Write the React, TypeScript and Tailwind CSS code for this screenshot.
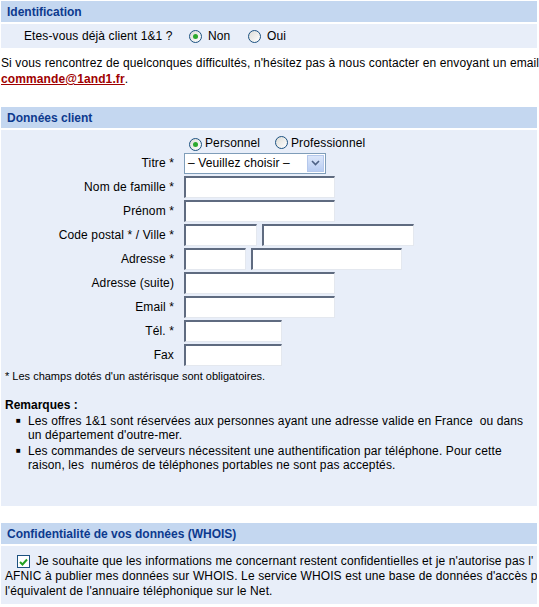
import React from "react";

function Radio({ checked }: { checked?: boolean }) {
  return (
    <span className="inline-flex w-[13px] h-[13px] rounded-full border border-[#1c5180] bg-[linear-gradient(135deg,#dcdcd7,#ffffff)] items-center justify-center shrink-0">
      {checked && <span className="w-[5px] h-[5px] rounded-full bg-[#2ca82c]" />}
    </span>
  );
}

function Field({ w }: { w: number }) {
  return (
    <span
      className="inline-block h-[22px] bg-white border-t-2 border-l-2 border-b border-r border-t-[#5f6b80] border-l-[#5f6b80] border-b-[#e4e8ef] border-r-[#e4e8ef]"
      style={{ width: w }}
    />
  );
}

function Row({ label, children }: { label: string; children: React.ReactNode }) {
  return (
    <div className="flex items-center h-[22px] mb-[2px]">
      <div className="w-[173px] text-right whitespace-nowrap">{label}</div>
      <div className="ml-[10px] flex items-center">{children}</div>
    </div>
  );
}

function Header({ children }: { children: React.ReactNode }) {
  return (
    <div className="h-[21px] bg-[#c4d7f0] px-[6px] font-bold text-[#0d3a8e] leading-[22px] tracking-normal">
      {children}
    </div>
  );
}

export default function App() {
  return (
    <div className="w-[539px] h-[607px] overflow-hidden bg-white text-[12px] text-black tracking-[0.12px] font-['Liberation_Sans',Arial,sans-serif] pt-px">
      <div className="ml-px w-[536px]">
        <Header>Identification</Header>
        <div className="mt-[2px] h-[24px] bg-[#e8eef9] flex items-center">
          <span className="ml-[23px] w-[165px]">Etes-vous déjà client 1&amp;1 ?</span>
          <Radio checked />
          <span className="ml-[6px] w-[40px]">Non</span>
          <Radio />
          <span className="ml-[6px]">Oui</span>
        </div>
        <div className="mt-[7px] leading-[16px] w-[540px]">
          <div className="whitespace-nowrap">
            Si vous rencontrez de quelconques difficultés, n'hésitez pas à nous contacter en envoyant un email
          </div>
          <a href="#" className="font-bold text-[#a00000] underline">commande@1and1.fr</a>.
        </div>

        <div className="mt-[20px]">
          <Header>Données client</Header>
        </div>
        <div className="mt-[2px] h-[376px] bg-[#e8eef9]">
          <div className="h-[22px] pt-[3px] flex items-center">
            <span className="ml-[188px]"><Radio checked /></span>
            <span className="ml-[3px] w-[70px]">Personnel</span>
            <Radio />
            <span className="ml-[3px]">Professionnel</span>
          </div>
          <Row label="Titre *">
            <span className="inline-flex items-center h-[21px] w-[142px] bg-white border border-[#7f9db9] pl-[3px] pr-px">
              <span className="flex-1 whitespace-nowrap">– Veuillez choisir –</span>
              <span className="w-[17px] h-[17px] bg-[linear-gradient(#dbe6fa,#b9cdf2)] border border-[#b5c8ec] flex items-center justify-center">
                <svg width="9" height="6" viewBox="0 0 9 6">
                  <path d="M1 1 L4.5 4.5 L8 1" stroke="#4d6185" strokeWidth="1.6" fill="none" />
                </svg>
              </span>
            </span>
          </Row>
          <Row label="Nom de famille *"><Field w={151} /></Row>
          <Row label="Prénom *"><Field w={151} /></Row>
          <Row label="Code postal * / Ville *">
            <Field w={73} />
            <span className="w-[5px]" />
            <Field w={152} />
          </Row>
          <Row label="Adresse *">
            <Field w={62} />
            <span className="w-[5px]" />
            <Field w={151} />
          </Row>
          <Row label="Adresse (suite)"><Field w={151} /></Row>
          <Row label="Email *"><Field w={151} /></Row>
          <Row label="Tél. *"><Field w={98} /></Row>
          <Row label="Fax"><Field w={98} /></Row>
          <div className="pl-[4px] text-[11px] leading-[16px] tracking-normal">
            * Les champs dotés d'un astérisque sont obligatoires.
          </div>
          <div className="pl-[4px] mt-[13px] font-bold leading-[16px] tracking-normal">Remarques :</div>
          <ul className="mt-px pl-[15px] pr-[8px] leading-[14px]">
            <li className="flex mb-[2px]">
              <span className="w-[12px] shrink-0 text-[8px] leading-[14px]">■</span>
              <span>Les offres 1&amp;1 sont réservées aux personnes ayant une adresse valide en France &nbsp;ou dans un département d'outre-mer.</span>
            </li>
            <li className="flex">
              <span className="w-[12px] shrink-0 text-[8px] leading-[14px]">■</span>
              <span>Les commandes de serveurs nécessitent une authentification par téléphone. Pour cette raison, les &nbsp;numéros de téléphones portables ne sont pas acceptés.</span>
            </li>
          </ul>
        </div>

        <div className="mt-[17px]">
          <Header>Confidentialité de vos données (WHOIS)</Header>
        </div>
        <div className="mt-[2px] h-[58px] bg-[#e8eef9] overflow-hidden pl-[4px] pt-[8px] leading-[15px] whitespace-nowrap">
          <div className="flex items-center">
            <span className="ml-[12px] w-[13px] h-[13px] border border-[#1c5180] bg-white flex items-center justify-center shrink-0">
              <svg width="9" height="8" viewBox="0 0 9 8">
                <path d="M1 4 L3.5 6.5 L8 1.5" stroke="#21a121" strokeWidth="2" fill="none" />
              </svg>
            </span>
            <span className="ml-[6px]">Je souhaite que les informations me concernant restent confidentielles et je n'autorise pas l'</span>
          </div>
          <div>AFNIC à publier mes données sur WHOIS. Le service WHOIS est une base de données d'accès public,</div>
          <div>l'équivalent de l'annuaire téléphonique sur le Net.</div>
        </div>
      </div>
    </div>
  );
}
